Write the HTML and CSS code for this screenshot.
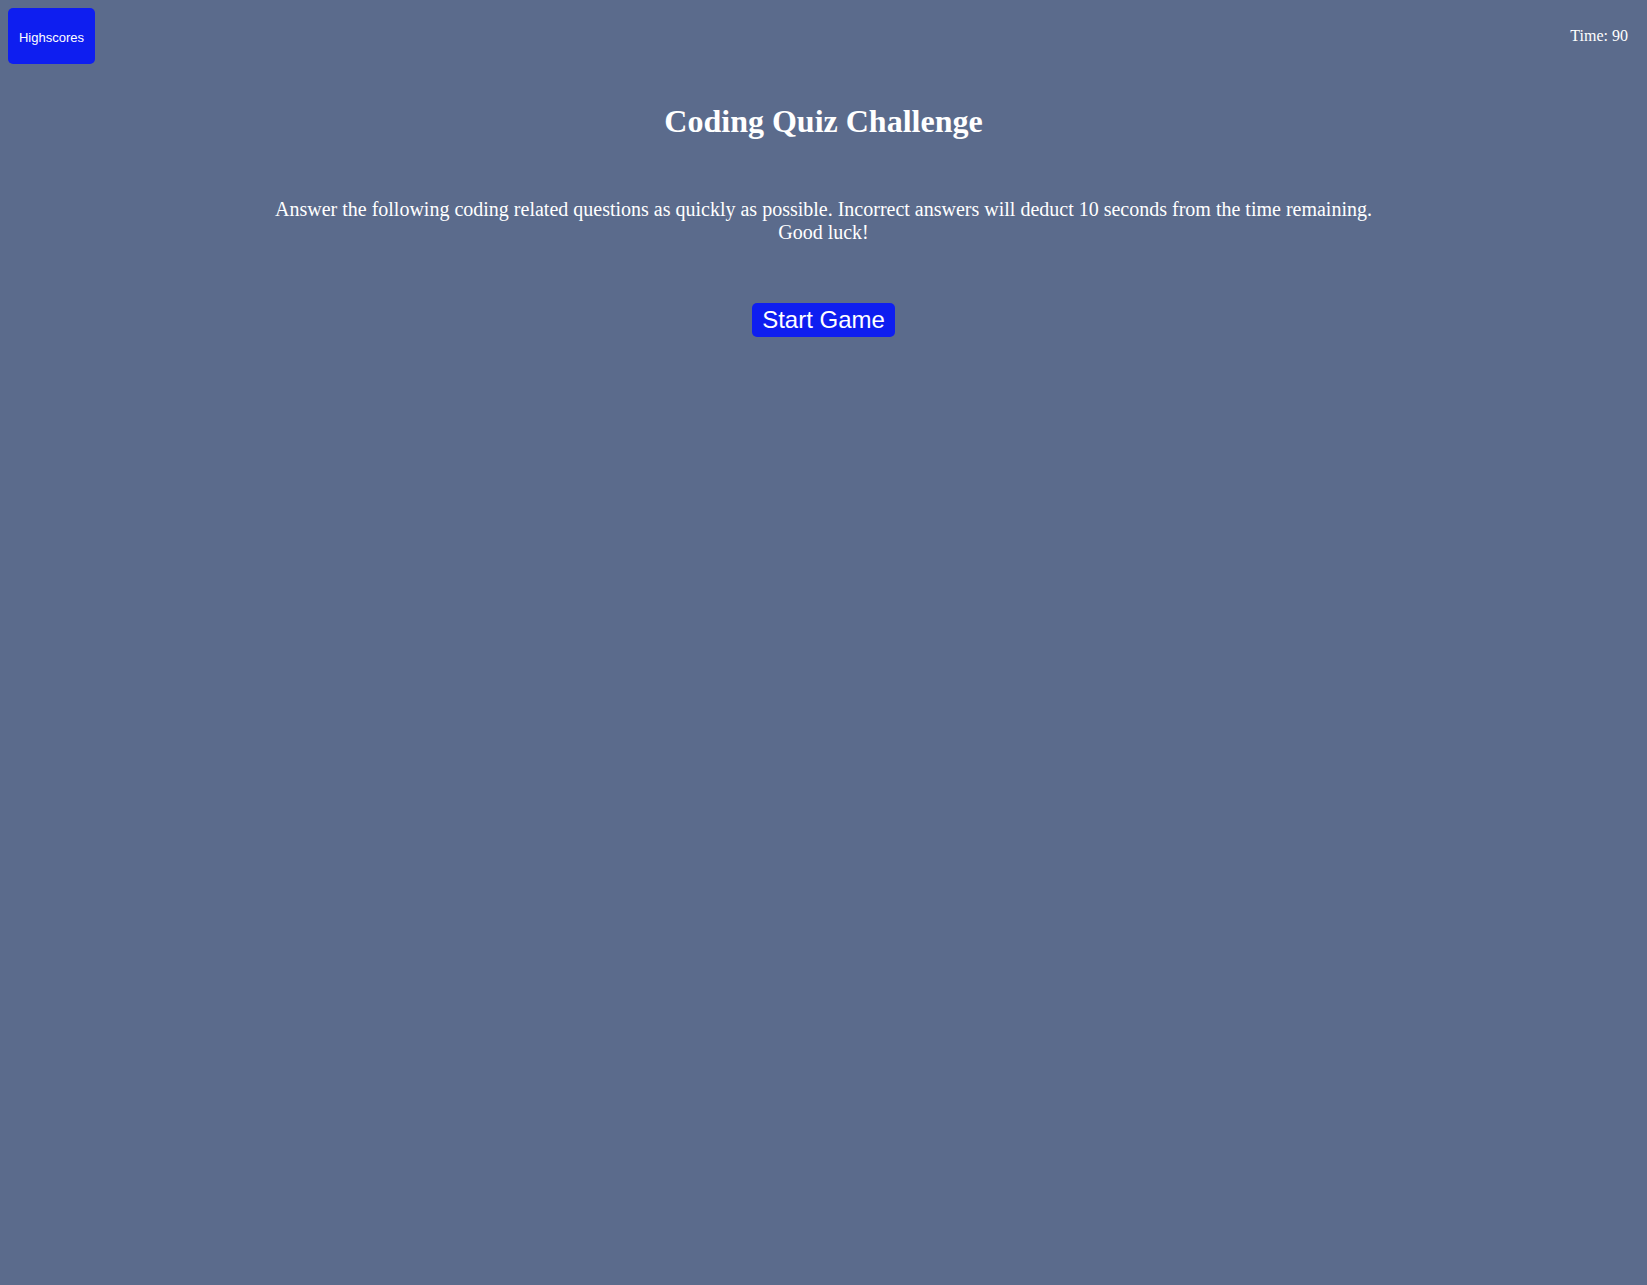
FILE: index.html
```html
<!DOCTYPE html>
<html>
<head>
<meta charset="utf-8">
<title>Coding Quiz</title>
<link rel="stylesheet" href="styles.css">
</head>
<body>
<header class="topbar">
  <button class="highscores">Highscores</button>
  <div class="timer">Time: 90</div>
</header>
<main class="intro">
  <h1 class="title">Coding Quiz Challenge</h1>
  <p class="description">Answer the following coding related questions as quickly as possible. Incorrect answers will deduct 10 seconds from the time remaining. Good luck!</p>
  <button class="start">Start Game</button>
</main>
</body>
</html>
```
FILE: styles.css
```css
html, body {
  margin: 0;
  padding: 0;
}
body {
  background: #5b6b8c;
  color: #ffffff;
  font-family: "Liberation Serif", "Times New Roman", serif;
  min-height: 1285px;
}
.topbar {
  display: flex;
  justify-content: space-between;
  align-items: center;
  padding: 8px 19px 0 8px;
}
.highscores {
  width: 87px;
  height: 56px;
  background: #0e1ef0;
  color: #ffffff;
  border: none;
  border-radius: 5px;
  font-family: "Liberation Sans", Arial, sans-serif;
  font-size: 13px;
  padding: 2px 0 0;
}
.timer {
  font-size: 16px;
}
.intro {
  display: flex;
  flex-direction: column;
  align-items: center;
  text-align: center;
}
.title {
  font-size: 32px;
  font-weight: bold;
  margin: 39px 0 0;
}
.description {
  font-size: 20px;
  width: 1100px;
  margin: 58px 0 0;
}
.start {
  margin-top: 59px;
  width: 143px;
  height: 34px;
  background: #0e1ef0;
  color: #ffffff;
  border: none;
  border-radius: 5px;
  font-family: "Liberation Sans", Arial, sans-serif;
  font-size: 24px;
  padding: 0;
}
```
